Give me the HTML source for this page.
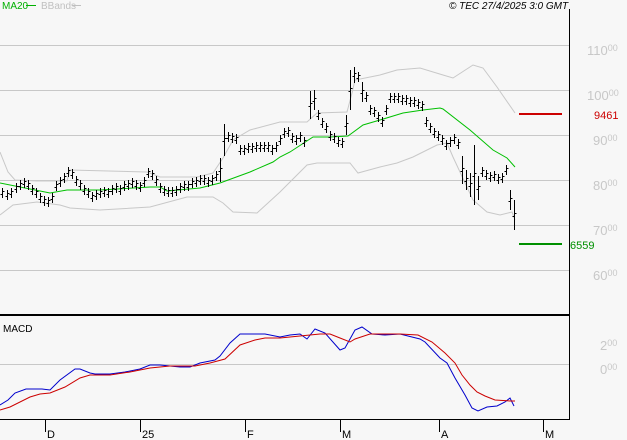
<!DOCTYPE html>
<html><head><meta charset="utf-8"><style>
html,body{margin:0;padding:0;background:#f7f7f7;width:627px;height:440px;overflow:hidden}
svg{display:block}
text{font-family:"Liberation Sans",sans-serif}
</style></head><body>
<svg id="s" width="627" height="440" xmlns="http://www.w3.org/2000/svg">
<rect width="627" height="440" fill="#f7f7f7"/>
<g stroke="#c8c8c8" stroke-width="1">
<line x1="0" y1="45.5" x2="569" y2="45.5"/><line x1="0" y1="90.5" x2="569" y2="90.5"/>
<line x1="0" y1="135.5" x2="569" y2="135.5"/><line x1="0" y1="180.5" x2="569" y2="180.5"/>
<line x1="0" y1="225.5" x2="569" y2="225.5"/><line x1="0" y1="270.5" x2="569" y2="270.5"/>
<line x1="0" y1="364.5" x2="569" y2="364.5"/>
</g>
<g fill="none" stroke="#c8c8c8" stroke-width="1">
<polyline points="0,152 8,172 15,180 37,181 67,181 70,170 147,172 160,177 197,177 213,173 223,158 233,140 250,130 280,122 307,122 317,113 347,112 352,93 355,80 380,75 397,70 420,68 443,75 453,78 473,65 483,68 497,87 515,113"/>
<polyline points="0,215 13,205 37,202 60,205 70,208 100,210 150,207 187,197 213,197 223,203 233,212 257,213 280,192 307,165 317,163 350,163 358,173 380,167 397,163 413,157 437,145 447,143 453,157 473,200 487,212 500,215 512,212 515,220"/>
</g>
<polyline fill="none" stroke="#00c000" stroke-width="1" points="0,183 50,193 67,190 100,190 150,187 160,187 167,191 200,188 220,183 250,172 273,162 280,157 290,152 313,137 330,137 348,136 363,125 380,120 403,113 423,110 440,108 443,109 470,130 493,150 507,158 515,167"/>
<g id="bars" stroke="#000" stroke-width="1" fill="none"></g>
<line x1="519" y1="114" x2="562" y2="114" stroke="#cc0000" stroke-width="2"/>
<line x1="519" y1="244" x2="562" y2="244" stroke="#009000" stroke-width="2"/>
<line x1="0" y1="315" x2="569" y2="315" stroke="#000" stroke-width="2"/>
<line x1="569.5" y1="9" x2="569.5" y2="420" stroke="#000" stroke-width="1"/>
<line x1="0" y1="419.5" x2="570" y2="419.5" stroke="#000" stroke-width="1"/>
<g stroke="#000" stroke-width="1">
<line x1="45.5" y1="419" x2="45.5" y2="432"/><line x1="140.5" y1="419" x2="140.5" y2="432"/>
<line x1="245.5" y1="419" x2="245.5" y2="432"/><line x1="340.5" y1="419" x2="340.5" y2="432"/>
<line x1="439.5" y1="419" x2="439.5" y2="432"/><line x1="543.5" y1="419" x2="543.5" y2="432"/>
</g>
<g font-size="11" fill="#000">
<text x="47" y="438">D</text><text x="142" y="438">25</text><text x="247" y="438">F</text>
<text x="342" y="438">M</text><text x="441" y="438">A</text><text x="545" y="438">M</text>
</g>
<polyline fill="none" stroke="#0000cc" stroke-width="1" points="0,405 8,400 15,393 26,389 42,389 50,390 60,380 75,369 80,369 90,373 95,374 110,374 125,372 140,369 150,365 160,365 170,366 180,367 190,367 200,363 215,360 220,356 230,343 240,334 265,334 280,337 290,335 300,334 307,339 315,329 325,333 340,350 345,348 355,330 362,327 372,334 385,335 400,334 420,339 425,342 440,358 447,363 455,378 465,395 472,408 478,411 487,407 497,406 505,402 510,398 514,406"/>
<polyline fill="none" stroke="#cc0000" stroke-width="1" points="0,410 10,407 30,397 40,394 50,393 65,387 80,378 90,375 110,375 130,372 150,368 170,366 195,366 210,363 225,359 240,345 255,340 265,338 280,338 300,336 320,334 330,334 340,338 350,342 355,339 370,334 400,334 418,335 432,342 445,353 455,363 462,375 470,385 477,392 485,396 495,400 510,401 515,401"/>
<text x="3" y="332" font-size="10" fill="#000">MACD</text>
<text x="2" y="9" font-size="10" fill="#00b000">MA20</text>
<line x1="26" y1="5.5" x2="36" y2="5.5" stroke="#00b000"/>
<text x="41" y="9" font-size="10" fill="#c0c0c0">BBands</text>
<line x1="72" y1="5.5" x2="81" y2="5.5" stroke="#c0c0c0"/>
<text x="449" y="9" font-size="10" font-style="italic" fill="#000">© TEC 27/4/2025 3:0 GMT</text>
<g font-size="13" fill="#c8c8c8">
<text x="587" y="55">110<tspan font-size="9" dy="-4">00</tspan></text>
<text x="587" y="100">100<tspan font-size="9" dy="-4">00</tspan></text>
<text x="593" y="145">90<tspan font-size="9" dy="-4">00</tspan></text>
<text x="593" y="190">80<tspan font-size="9" dy="-4">00</tspan></text>
<text x="593" y="235">70<tspan font-size="9" dy="-4">00</tspan></text>
<text x="593" y="280">60<tspan font-size="9" dy="-4">00</tspan></text>
<text x="600" y="350">2<tspan font-size="9" dy="-4">00</tspan></text>
<text x="600" y="374">0<tspan font-size="9" dy="-4">00</tspan></text>
</g>
<text x="594" y="119" font-size="11" fill="#cc0000">9461</text>
<text x="570" y="249" font-size="11" fill="#009000">6559</text>
</svg>
<script>
var d=[[2,193],[7,195],[11,193],[16,188],[20,185],[24,183],[28,185],[32,190],[36,193],[40,198],[44,201],[48,202],[52,198],[56,186],[60,182],[64,178],[68,172],[72,174],[76,181],[80,185],[84,190],[88,193],[92,197],[96,195],[100,193],[104,192],[108,193],[112,190],[116,188],[120,190],[124,186],[128,185],[132,183],[136,185],[140,187],[144,182],[148,173],[152,175],[156,181],[160,188],[164,191],[168,192],[172,192],[176,191],[180,188],[184,186],[188,186],[192,183],[196,182],[200,180],[204,180],[208,182],[212,180],[216,176],[220,170,12],[224,140,16],[228,137],[232,138],[236,139],[240,150],[244,150],[248,148],[252,148],[256,147],[260,147],[264,147],[268,147],[272,150],[276,147],[280,140],[284,133],[288,132],[292,138],[296,140],[300,137],[304,142],[310,105,14],[314,100,10],[318,115],[322,123],[326,128],[330,136],[334,138],[338,142],[342,143],[346,125,10],[350,90,20],[354,75,8],[358,77],[362,92,10],[366,97],[370,110],[374,112],[378,117],[382,122],[386,110],[390,98],[394,98],[398,98],[402,100],[406,100],[410,102],[414,102],[418,104],[422,106],[426,122],[430,128],[434,133],[438,136],[442,140],[446,145],[450,142],[454,139],[458,144],[462,170,14],[466,180,10],[470,185,12],[474,175,30],[478,188,12],[482,172],[486,175],[490,177],[494,176],[498,179],[502,178],[506,170],[510,200,10],[514,215,15]];
var s='';d.forEach(function(b){var x=b[0]+.5,y=b[1],h=b[2]||5;s+='M'+x+' '+(y-h)+'V'+(y+h)+'M'+(x-2)+' '+(y+1.5)+'H'+x+'M'+x+' '+(y-1.5)+'H'+(x+2);});
var p=document.createElementNS('http://www.w3.org/2000/svg','path');p.setAttribute('d',s);document.getElementById('bars').appendChild(p);
</script>
</body></html>
